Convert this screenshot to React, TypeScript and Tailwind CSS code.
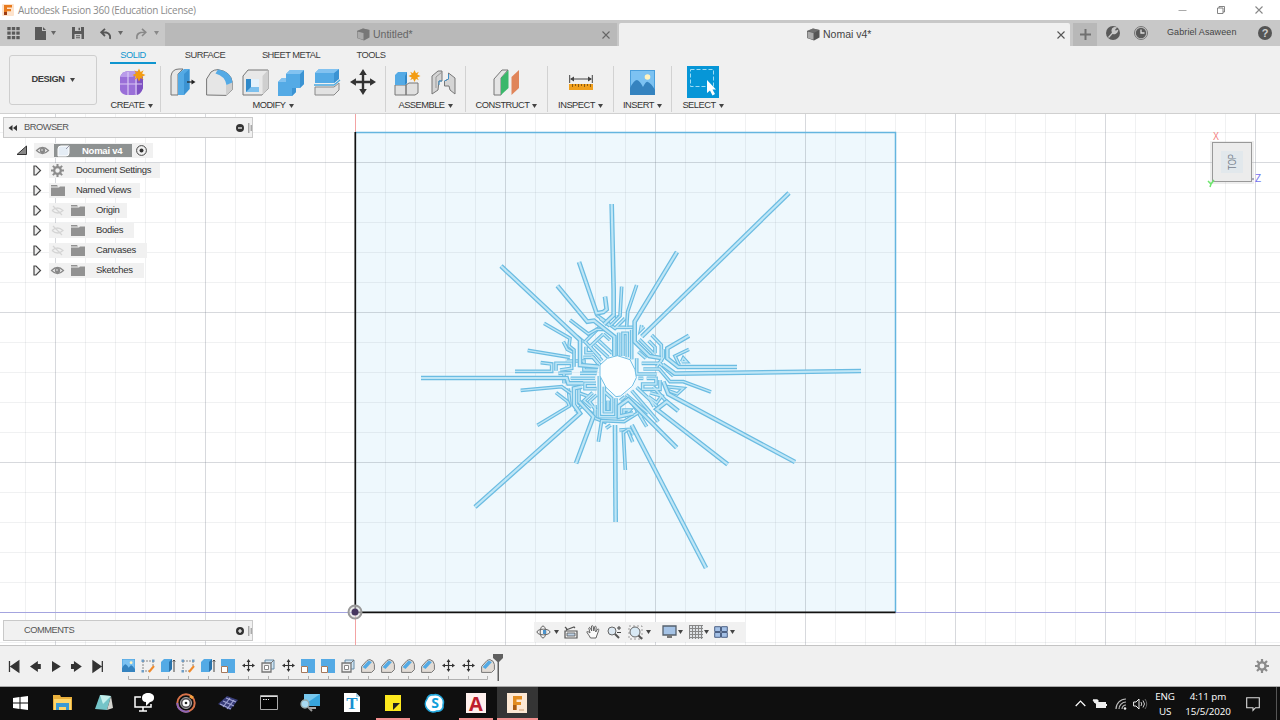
import React from "react";

type P = { children?: React.ReactNode };

const Svg = ({ w, h, vb, children, c = "" }: { w: number; h: number; vb?: string; c?: string } & P) => (
  <svg width={w} height={h} viewBox={vb ?? `0 0 ${w} ${h}`} fill="none" className={`block shrink-0 overflow-visible ${c}`}>
    {children}
  </svg>
);

const Caret = ({ c = "text-[#444]" }: { c?: string }) => (
  <Svg w={5} h={4} c={c}><path d="M0 0h5L2.500 4z" fill="currentColor" /></Svg>
);

const Cube = ({ c = "#555" }: { c?: string }) => (
  <Svg w={14} h={13}>
    <path d="M1 3 7 .5 13.5 2v7.5L8 12.5 1 10z" fill={c} />
    <path d="M1.5 3.5 7.5 5v6.8L1.500 10z" fill="#aaa" />
    <path d="M1 3 7 .5 13.500 2 8 4.800z" fill="#777" opacity=".7" />
  </Svg>
);

const X = ({ s = 8, c = "#555" }: { s?: number; c?: string }) => (
  <Svg w={s} h={s}><path d={`M.5 .5 ${s - 0.5} ${s - 0.5}M${s - 0.5} .5 .5 ${s - 0.5}`} stroke={c} strokeWidth="1.100" /></Svg>
);

const Star = ({ x, y, r = 6 }: { x: number; y: number; r?: number }) => (
  <g transform={`translate(${x} ${y}) scale(${r / 6})`}>
    <path d="M0-6 1.500-2.800 4.300-4.300 2.800-1.500 6 0 2.800 1.500 4.300 4.300 1.500 2.800 0 6-1.500 2.800-4.300 4.300-2.800 1.500-6 0-2.800-1.500-4.300-4.300-1.500-2.800z" fill="#f39c12" />
  </g>
);

const MovePath = ({ c = "#333" }: { c?: string }) => (
  <g fill={c}>
    <path d="M13.100 5h-2.200v5.900H5v2.200h5.900V19h2.200v-5.900H19v-2.200h-5.900z" />
    <path d="M12 0 15.500 5.500h-7zM12 24l3.500-5.500h-7zM0 12l5.500-3.500v7zM24 12l-5.500-3.500v7z" />
  </g>
);

const Gear = ({ s = 13 }: { s?: number }) => (
  <Svg w={s} h={s} vb="0 0 14 14">
    <circle cx="7" cy="7" r="3.600" stroke="#8c8c8c" strokeWidth="2.400" />
    <path d="M7 0v3M7 11v3M0 7h3M11 7h3M2 2l2.200 2.200M9.800 9.800 12 12M12 2 9.800 4.200M4.200 9.800 2 12" stroke="#8c8c8c" strokeWidth="2.200" />
  </Svg>
);

/* ---------- title and tab bars ---------- */

const TitleBar = () => (
  <div className="flex h-[20px] shrink-0 items-center bg-white pl-[2px] pr-[17px]">
    <Svg w={12} h={12}>
      <rect width="12" height="12" rx="1" fill="#fde3cc" />
      <path d="M2 1h8v2.500H5V5h4v2.300H5V11H2z" fill="#e87a1d" />
      <path d="M2 8h3v3H2z" fill="#9c3a10" />
    </Svg>
    <span className="ml-[4px] whitespace-nowrap font-['Open_Sans',sans-serif] text-[10px] tracking-[-0.290px] text-[#8b8b8b]">Autodesk Fusion 360 (Education License)</span>
    <div className="ml-auto flex items-center gap-[30px]">
      <Svg w={9} h={9}><path d="M.5 4.500h8" stroke="#aaa" /></Svg>
      <Svg w={8} h={8}><path d="M2 2V.5h5.500V6H6M.5 2H6v5.500H.5z" stroke="#777" strokeWidth=".9" /></Svg>
      <X s={8} c="#888" />
    </div>
  </div>
);

const TabBar = () => (
  <div className="flex h-[26px] shrink-0 items-stretch bg-[#c8c8c8]">
    <div className="flex w-[165px] items-center pl-[7px]">
      <Svg w={13} h={12}>
        {[0, 4.5, 9].map((y) => [0, 4.5, 9].map((x) => <rect key={x + "-" + y} x={x + 0.3} y={y} width="3.400" height="3.200" fill="#5a5a5a" />))}
      </Svg>
      <Svg w={11} h={13} c="ml-[15px]"><path d="M0 0h7v4h4v9H0zM8 0l3 3H8z" fill="#5a5a5a" /></Svg>
      <span className="ml-[5px] mr-[1px]"><Caret c="text-[#666]" /></span>
      <Svg w={12} h={12} c="ml-[15px]">
        <path d="M0 0h12v12H0z" fill="#5a5a5a" /><path d="M3 0h6v4H3zM2.500 7h7v5h-7z" fill="#c8c8c8" /><path d="M6.500 .8h1.500v2.500H6.500zM4 8.300h4v1H4zM4 10.200h4v1H4z" fill="#5a5a5a" />
      </Svg>
      <Svg w={11} h={11} c="ml-[16px]"><path d="M10 11C11 5.500 7.500 4 2 4.300M5 .8 1.200 4.300 5 8" stroke="#555" strokeWidth="1.800" /></Svg>
      <span className="ml-[7px] mr-[1px]"><Caret c="text-[#666]" /></span>
      <Svg w={11} h={11} c="ml-[12px]"><path d="M1 11C0 5.500 3.500 4 9 4.300M6 .8l3.800 3.500L6 8" stroke="#888" strokeWidth="1.600" /></Svg>
      <span className="ml-[7px]"><Caret c="text-[#888]" /></span>
    </div>
    <div className="mt-[3px] flex w-[452px] items-center bg-[#b9b9b9] pl-[191px] pr-[7px]">
      <Cube c="#777" />
      <span className="ml-[3px] text-[10.500px] text-[#666]">Untitled*</span>
      <span className="ml-auto"><X c="#666" /></span>
    </div>
    <div className="ml-[2px] mt-[3px] flex w-[451px] items-center rounded-t-[2px] bg-[#f0f0f0] pl-[187px] pr-[5px]">
      <Cube />
      <span className="ml-[3px] text-[10.500px] text-[#444]">Nomai v4*</span>
      <span className="ml-auto"><X /></span>
    </div>
    <div className="ml-[3px] mt-[3px] flex w-[24px] items-center justify-center bg-[#b8b8b8]">
      <Svg w={11} h={11}><path d="M5.500 0v11M0 5.500h11" stroke="#707070" strokeWidth="2" /></Svg>
    </div>
    <div className="flex flex-1 items-center pl-[9px]">
      <Svg w={14} h={14}><circle cx="7" cy="7" r="7" fill="#5a5a5a" /><path d="m2.500 11.500 4.500-5M11.500 4.500 9 5.500 8.500 3 10 1.800C6.500 1 5.500 4 6.500 6.500s4.500.500 5-2z" stroke="#c8c8c8" strokeWidth="1.300" fill="#c8c8c8" /></Svg>
      <Svg w={14} h={14} c="ml-[14px]"><circle cx="7" cy="7" r="6.500" stroke="#777" /><circle cx="7" cy="7" r="5.200" fill="#5a5a5a" /><path d="M7 3.500V7h3.500" stroke="#ddd" strokeWidth="1.300" /></Svg>
      <span className="ml-[19px] w-[72px] whitespace-nowrap text-[9px] tracking-[0.100px] text-[#444]">Gabriel Asaween</span>
      <div className="ml-[19px] flex size-[14px] items-center justify-center rounded-full bg-[#555] text-[11px] font-bold leading-none text-[#d0d0d0]">?</div>
    </div>
  </div>
);

/* ---------- ribbon ---------- */

const blue = "#54aae5";
const edge = "#777";

const PressPull = () => (
  <Svg w={26} h={28}>
    <path d="M1 8Q2 1 9 1H13L8 6v21H1z" fill="#e6e6e6" stroke={edge} />
    <path d="M8 6 14 1h5.500v20L14 27H8z" fill={blue} /><path d="M14 6 19.500 1v20L14 27z" fill="#3b93d3" />
    <path d="M17 14h6" stroke="#222" strokeWidth="1.200" /><path d="m21.500 11.500 4 2.500-4 2.500z" fill="#222" />
  </Svg>
);
const Fillet = () => (
  <Svg w={27} h={27}>
    <path d="M.6 26V10L5 3Q8 .6 12 .6q13 2 14.400 13v7L20 26.400z" fill="#e6e6e6" stroke={edge} />
    <path d="M20 16l6.400-2.400v7L20 26.400z" fill="#cfcfcf" />
    <path d="M12 .6q13 2 14.400 13L20.500 16Q19 7 9.500 4.500z" fill={blue} />
  </Svg>
);
const Shell = () => (
  <Svg w={27} h={27}>
    <path d="M1 7 6 1h20v19l-6 6H1z" fill="#e8e8e8" stroke={edge} /><path d="M20.500 7 26 1v19l-5.500 6z" fill="#cfcfcf" />
    <path d="M4 10h13v13H4z" fill="#3089c9" /><path d="M9 10h8v8H9z" fill="#e3f1fb" /><path d="m4 23 5-5h8v5z" fill="#7cc0ee" />
  </Svg>
);
const Combine = () => (
  <Svg w={28} h={27}>
    <path d="M9 5 13 1h14v14l-4 4h-4v4l-4 4H1V13l4-4h4z" fill={blue} /><path d="M23 5l4-4v14l-4 4zM19 19v4l-4 4v-8z" fill="#3b93d3" /><path d="M9 5l4-4h14l-4 4zM1 13l4-4h4v4z" fill="#82c2f0" />
  </Svg>
);
const Split = () => (
  <Svg w={26} h={28}>
    <path d="M1 5 5 1h20v9l-5 5H1z" fill={blue} /><path d="M20 5l5-4v10l-5 4z" fill="#3b93d3" /><path d="M1 5l4-4h20l-5 4z" fill="#82c2f0" />
    <path d="M0 17h20l6-5" stroke="#49a8e0" strokeWidth="1.300" /><path d="M1 19h19l5-4v7l-5 5H1z" fill="#e2e2e2" stroke="#888" />
  </Svg>
);
const Create = () => (
  <Svg w={28} h={28}>
    <path d="M2 9Q4 3 11 3h8q5 1 6 6v11q-2 6-9 7H8q-5-1-6-5z" fill="#9a6fd8" /><path d="M2 9Q4 3 11 3h8l-4 6Z" fill="#b99bea" /><path d="M19 9h6v11q-2 6-6 7z" fill="#7f52c2" />
    <path d="M10 4v23M2 16h22M18 8v18" stroke="#d9c8f4" strokeWidth="1.200" /><Star x={21} y={7} r={6.500} />
  </Svg>
);
const NewComp = () => (
  <Svg w={27} h={27}>
    <path d="M1 16h11v10H1zM12 16l3-2h9v10l-3 2h-9z" fill="#e0e0e0" stroke={edge} /><path d="M1 6 4 3h9v11l-2 2H1z" fill={blue} /><path d="M11 7l2-4v11l-2 2z" fill="#2f86c6" /><Star x={20.500} y={7} />
  </Svg>
);
const Joint = () => (
  <Svg w={25} h={25}>
    <path d="M1 24V6l6-5h4v10H8l-1 9z" fill="#d4d4d4" stroke="#777" /><path d="M5 18V7l6-5" stroke="#999" />
    <path d="M13.500 11l4-2V3l6.500 5v16l-5-4-1-4h-4.500z" fill="#d4d4d4" stroke="#777" /><path d="M8 15v-4h3M17.500 4v5l-4 2" stroke="#3b8fc9" />
  </Svg>
);
const Construct = () => (
  <Svg w={28} h={27}>
    <path d="M1 10 9 1h6L8 9v17H1z" fill="#e5e5e5" stroke={edge} /><path d="M8 9 15.500 1v18L8 26z" fill="#3bb76b" /><path d="M18.500 8 26 1v18l-7.500 7z" fill="#e0855a" />
  </Svg>
);
const Inspect = () => (
  <Svg w={24} h={15}>
    <path d="M.7 0v8M23.300 0v8M2 4h20" stroke="#444" /><path d="m1 4 4-2.500v5zM23 4l-4-2.500v5z" fill="#444" /><path d="M0 9h24v6H0z" fill="#f0a01e" /><path d="M3.500 9v3M6.500 9v2M9.500 9v3M12.500 9v2M15.500 9v3M18.500 9v2M21.500 9v3" stroke="#8b5a10" />
  </Svg>
);
const Insert = ({ s = 25 }: { s?: number }) => (
  <Svg w={s} h={s} vb="0 0 25 25">
    <path d="M0 0h25v25H0z" fill="#4a9fdc" /><path d="M1 1h23v17H1z" fill="#7cc2f2" /><path d="M0 18Q4 10 7 10q3 1 6 7 3-6 5-5 3 1 7 8v5H0z" fill="#3583bf" /><circle cx="17.500" cy="7" r="2.800" fill="#fff3c0" />
  </Svg>
);
const Select = () => (
  <Svg w={32} h={32}>
    <path d="M0 0h32v32H0z" fill="#0696d7" /><path d="M3.500 3.500h23v17h-23z" stroke="#9fdcf5" strokeDasharray="4 2" /><path d="M20 14v13l3-2.500 2.500 5 2.500-1.500-2.500-4.500H29z" fill="#fff" />
  </Svg>
);

const Group = ({ label, w, children, sep = true }: { label: string; w: string; sep?: boolean } & P) => (
  <div className={`flex flex-col items-center ${w} ${sep ? "border-r border-[#d2d2d2]" : ""}`}>
    <div className="flex h-[32px] shrink-0 items-center justify-center">{children}</div>
    <div className="flex h-[14px] shrink-0 items-center gap-[3px] whitespace-nowrap pt-[2px] text-[9.300px] leading-none tracking-[-0.500px] text-[#333]">{label}<Caret /></div>
  </div>
);

const Cell = ({ children }: P) => <div className="flex w-[36px] justify-center">{children}</div>;

const Ribbon = () => (
  <div className="flex h-[68px] shrink-0 border-b border-[#d0d0d0] bg-[#f0f0f0]">
    <div className="w-[103px] pl-[9px] pt-[9px]">
      <div className="flex h-[50px] w-[88px] items-center justify-center gap-[5px] rounded-[3px] border border-[#cecece] text-[9.300px] font-bold tracking-[-0.400px] text-[#3c3c3c]">DESIGN<Caret /></div>
    </div>
    <div className="flex flex-col">
      <div className="flex h-[20px] text-[9.300px] leading-[18px] tracking-[-0.500px] text-[#3c3c3c]">
        <div className="ml-[7px] h-[18px] w-[46px] border-b-2 border-[#0f95cf] text-center text-[#0f95cf]">SOLID</div>
        <div className="w-[98px] text-center">SURFACE</div>
        <div className="w-[74px] text-center">SHEET METAL</div>
        <div className="w-[86px] text-center">TOOLS</div>
      </div>
      <div className="flex h-[46px]">
        <Group label="CREATE" w="w-[58px]"><Create /></Group>
        <Group label="MODIFY" w="w-[225px]">
          <Cell><PressPull /></Cell><Cell><Fillet /></Cell><Cell><Shell /></Cell><Cell><Combine /></Cell><Cell><Split /></Cell>
          <Cell><Svg w={26} h={26} vb="0 0 24 24"><MovePath /></Svg></Cell>
        </Group>
        <Group label="ASSEMBLE" w="w-[80px]"><Cell><NewComp /></Cell><Cell><Joint /></Cell></Group>
        <Group label="CONSTRUCT" w="w-[82px]"><Construct /></Group>
        <Group label="INSPECT" w="w-[66px]"><Inspect /></Group>
        <Group label="INSERT" w="w-[58px]"><Insert /></Group>
        <Group label="SELECT" w="w-[62px]" sep={false}><Select /></Group>
      </div>
    </div>
  </div>
);

/* ---------- sketch ---------- */

// Channels that run from the ring to an open tip; sketch units are a third of a pixel.
const rays = [
  "867,-231 425,200",
  "531,-54 404,155 404,215 448,258 482,264",
  "335,-198 341,60 341,135 312,163",
  "237,-24 290,130 310,126 320,118 315,80",
  "3,-12 240,210 240,285 295,290",
  "172,47 262,155 282,152 343,200 343,258",
  "-237,324 200,324 205,340 250,340",
  "-75,711 240,430 222,405 222,355 246,350",
  "228,580 280,440 238,395",
  "347,756 345,465",
  "618,894 395,465",
  "530,533 385,388 357,408 357,440 400,430",
  "683,583 470,418 500,395 535,423",
  "885,576 505,372 490,335",
  "1083,303 525,311 488,284",
  "711,291 535,291 502,265 502,235 567,197",
];
const thin = [
  "365,50 360,138 332,166", "410,45 383,125 380,170", "132,160 210,205 207,228 222,240 222,290",
  "210,150 265,192 290,178 318,178", "83,241 210,262", "45,304 155,304 155,282 122,278",
  "62,361 185,350 212,370", "112,466 208,408 203,395 168,368",
  "295,515 305,452 372,455 415,428", "376,600 370,488 382,480", "398,516 385,485",
  "633,366 550,335 510,335 478,297 430,297", "567,238 525,258 538,285",
];
// Narrow folded channels round the ring.
const maze = [
  "290,135 345,175 375,145", "348,172 400,172", "356,188 356,258", "369,258 369,190 382,190 382,262", "395,180 395,268",
  "418,208 462,252", "446,212 465,232 465,250", "455,195 484,225 484,275", "425,165 422,180 432,170",
  "410,265 410,312 470,312", "425,280 480,280 520,318", "440,325 468,325 468,342 428,342 428,358 480,358 480,330",
  "500,350 550,355 532,372 505,362", "410,352 478,415", "395,362 475,455", "378,374 445,430",
  "372,440 372,420 390,420 372,440", "410,420 440,470", "450,368 485,378 470,398 445,380 462,410",
  "460,350 500,395", "298,318 298,440 348,440 348,385", "313,350 313,425 335,425 335,385 313,365", "324,392 324,420",
  "290,310 240,310", "175,310 215,308", "180,300 215,295 215,280 168,280 168,302", "200,273 252,273 252,300 292,300",
  "285,325 212,325", "288,340 255,340 255,356 290,356", "278,368 252,392 275,412", "290,375 268,395 288,420",
  "237,345 237,400 278,432", "205,355 210,408", "300,170 255,215 300,262", "310,192 270,230 306,272", "285,225 325,262",
  "296,212 337,250", "190,215 202,238 225,250", "250,262 280,262 295,282", "545,275 550,264 560,275 545,275",
  "318,475 332,465", "358,480 390,478 400,495",
  "258,230 258,248 280,248", "300,145 330,168", "350,150 350,135", "490,238 490,262 470,290", "415,325 430,325",
  "240,370 262,378", "225,425 250,405", "330,210 310,192", "192,340 192,312", "250,215 232,200", "438,265 415,245",
  "360,392 375,380", "400,405 425,442", "285,405 285,445 320,458", "300,285 275,258",
];

const Lines = ({ d, a, b }: { d: string[]; a: number; b: number }) => (
  <g strokeLinejoin="miter" strokeLinecap="butt">
    {d.map((p) => <polyline key={"o" + p} points={p} stroke="#6bbce2" strokeWidth={a} />)}
    {d.map((p) => <polyline key={"i" + p} points={p} stroke="#bfe6f6" strokeWidth={b} />)}
  </g>
);

const range = (a: number, b: number, s: number) => Array.from({ length: Math.floor((b - a) / s) + 1 }, (_, i) => a + i * s);

const Sketch = () => (
  <svg className="absolute inset-0" width="1280" height="531" viewBox="0 114 1280 531" fill="none">
    <rect x="0" y="114" width="1280" height="531" fill="#fff" />
    <rect x="355" y="132" width="541" height="480" fill="#eef8fd" />
    <g shapeRendering="crispEdges">
      {range(25, 1280, 30).map((x) => <path key={x} d={`M${x + 0.5} 114v531`} stroke="#6b7480" strokeOpacity={(x - 55) % 150 === 0 ? 0.27 : 0.1} />)}
      {range(132, 645, 30).map((y) => <path key={y} d={`M0 ${y + 0.5}h1280`} stroke="#6b7480" strokeOpacity={(y - 162) % 150 === 0 ? 0.27 : 0.1} />)}
      <path d="M0 612.500h1280" stroke="#a4a4df" />
      <path d="M355.500 114v18M355.500 612v33" stroke="#f3a3a3" />
    </g>
    <path d="M355 132.500h540.500V612" stroke="#64b5df" strokeWidth="1.500" />
    <g transform="translate(500 270) scale(.33333)">
      <circle cx="353" cy="317" r="56" fill="#f8fdff" />
      <Lines d={maze} a={11} b={4.5} />
      <Lines d={thin} a={11} b={4} />
      <Lines d={rays} a={14} b={6.500} />
      <path d="m300 285 22-20 30-8 38 12 15 30 4 24-12 25-35 30-14 2-30-28-18-34z" fill="#fbfeff" stroke="#6fbfe5" strokeWidth="3" />
    </g>
    <path d="M355.300 132v480M355 612.300h540.500" stroke="#111" strokeWidth="1.700" />
    <circle cx="355" cy="612" r="6.500" stroke="#999" strokeWidth="2" fill="#ddd" fillOpacity=".6" />
    <circle cx="355" cy="612" r="3.500" fill="#46365e" />
  </svg>
);

/* ---------- browser tree ---------- */

const Eye = ({ off }: { off?: boolean }) => (
  <Svg w={13} h={9}>
    {off ? (
      <path d="M1 4.500Q6.500-.5 12 4.500 6.500 9.500 1 4.500M2 0l9 9" stroke="#d4d4d4" strokeWidth="1.200" />
    ) : (
      <><path d="M.5 4.500Q6.500-1.500 12.500 4.500 6.500 10.500.5 4.500z" fill="#eee" stroke="#888" strokeWidth="1.200" /><circle cx="6.500" cy="4.500" r="2.700" fill="#888" /><circle cx="6" cy="4" r=".8" fill="#eee" /></>
    )}
  </Svg>
);
const Folder = () => <Svg w={14} h={11}><path d="M0 0h6l1 1.500H0zM0 2.500h8l1-1h5V11H0z" fill="#929292" /></Svg>;
const Tri = () => <Svg w={8} h={11}><path d="M1 1h2l4.500 4.500L3 10H1z" stroke="#444" strokeWidth="1.200" fill="#eee" /></Svg>;

const Row = ({ label, icon, eye, w }: { label: string; icon: React.ReactNode; eye?: React.ReactNode; w: string }) => (
  <div className="flex h-[20px] items-center pl-[30px]">
    <Tri />
    <div className={`ml-[8px] flex h-[15px] items-center whitespace-nowrap bg-[#f1f1f1] ${w}`}>
      {eye && <div className="flex w-[20px] pl-[2px]">{eye}</div>}
      <div className="flex w-[27px] pl-[2px]">{icon}</div>
      <span className="text-[9.500px] leading-none tracking-[-0.300px] text-[#333]">{label}</span>
    </div>
  </div>
);

const PanelHead = ({ label, plus }: { label: string; plus?: boolean }) => (
  <div className="flex h-[21px] w-[250px] items-center border border-[#c9c9c9] bg-[#f1f1f1] pl-[4px] text-[9.300px] tracking-[-0.500px] text-[#555]">
    <div className="w-[16px]">{!plus && <Svg w={9} h={6}><path d="M4.500 0v6L.5 3zM9 0v6L5 3z" fill="#333" /></Svg>}</div>
    {label}
    <div className="ml-auto mr-[4px]">
      <Svg w={8} h={8}><circle cx="4" cy="4" r="4" fill="#333" /><path d={plus ? "M2 4h4M4 2v4" : "M2 4h4"} stroke="#fff" strokeWidth="1.200" /></Svg>
    </div>
    <Svg w={4} h={10}><path d="M.8 0v10M3.200 2v6" stroke="#888" /></Svg>
  </div>
);

const Browser = () => (
  <div className="absolute left-[3px] top-[3px] w-[250px]">
    <PanelHead label="BROWSER" />
    <div className="flex h-[20px] items-center pl-[14px] pt-[5px]">
      <Svg w={10} h={9}><path d="M9.500 0v8.500H0z" fill="#888" stroke="#333" /></Svg>
      <div className="ml-[7px] flex h-[15px] w-[119px] items-center bg-[#f1f1f1] pl-[2px]">
        <Eye />
        <div className="ml-[5px] flex h-[13px] w-[78px] items-center bg-[#8e9292] pl-[3px]">
          <Svg w={13} h={12}><path d="M1 4q0-3 3-3h8v7q0 3-3 3H1z" fill="#e5edf5" stroke="#fff" /><path d="M9 4l3-3" stroke="#99a" /></Svg>
          <span className="ml-[12px] whitespace-nowrap text-[9.500px] font-bold leading-none tracking-[-0.250px] text-white">Nomai v4</span>
        </div>
        <Svg w={11} h={11} c="ml-[4px]"><circle cx="5.500" cy="5.500" r="4.900" stroke="#444" /><circle cx="5.500" cy="5.500" r="2" fill="#333" /></Svg>
      </div>
    </div>
    <div className="pt-[2px]">
      <Row label="Document Settings" icon={<Gear />} w="w-[111px]" />
      <Row label="Named Views" icon={<Folder />} w="w-[91px]" />
      <Row label="Origin" eye={<Eye off />} icon={<Folder />} w="w-[78px]" />
      <Row label="Bodies" eye={<Eye off />} icon={<Folder />} w="w-[85px]" />
      <Row label="Canvases" eye={<Eye off />} icon={<Folder />} w="w-[98px]" />
      <Row label="Sketches" eye={<Eye />} icon={<Folder />} w="w-[95px]" />
    </div>
  </div>
);

const ViewCube = () => (
  <svg className="absolute left-[1205px] top-[14px]" width="62" height="64" viewBox="1205 128 62 64" fill="none">
    <rect x="1210" y="141" width="44" height="43" fill="#bbb" opacity=".25" />
    <rect x="1212.500" y="142.500" width="39" height="39" fill="#ececec" stroke="#999" />
    <rect x="1221" y="151" width="22" height="22" fill="#e2e8ec" />
    <text transform="translate(1235.500 170) rotate(-90)" fontSize="10" textLength="16" lengthAdjust="spacingAndGlyphs" fill="#78838f">TOP</text>
    <text x="1213" y="140" fontSize="10" textLength="6" lengthAdjust="spacingAndGlyphs" fill="#f37d7d">X</text>
    <text x="1255" y="182" fontSize="10" fill="#7373ee">Z</text>
    <path d="m1208 181 3 3 3-4M1211 184l-1 3" stroke="#6de56d" strokeWidth="1.500" />
    <path d="M1252 179h2" stroke="#668" />
  </svg>
);

const NavBar = () => (
  <div className="absolute left-[534px] top-[508px] flex h-[20px] w-[211px] items-center bg-[#f1f1f1] pl-[2px]">
    <Svg w={15} h={14}><ellipse cx="7.500" cy="7" rx="6.500" ry="2.800" stroke="#666" /><ellipse cx="7" cy="7" rx="2.800" ry="6" stroke="#666" /><path d="M7 5h3v4H7z" fill="#4b93cc" /></Svg>
    <span className="ml-[3px]"><Caret /></span>
    <Svg w={14} h={13} c="ml-[5px]"><path d="M1 5h12v7H1zM2 4l8-3 1 1M3 3 1 1" stroke="#555" strokeWidth="1.200" /><path d="M3 7h8v3H3z" fill="#bcd0e4" stroke="#555" strokeWidth=".8" /></Svg>
    <Svg w={14} h={14} c="ml-[8px]"><path d="M4.500 13C3 10 1 8 .8 6.800 2 6 3.300 7.500 4 8L2.800 3c.7-1.200 1.700-.3 2 1l.9 2-.2-5c1-.9 1.700 0 1.800 1L7.800 6l1-4.500c1-.7 1.600.2 1.400 1.200L9.700 7l2-3c1-.3 1.400.6 1 1.400L11 10l-1 3z" fill="#fafafa" stroke="#555" strokeWidth=".9" /></Svg>
    <Svg w={15} h={14} c="ml-[7px]"><circle cx="5" cy="6" r="4" fill="#dce8f2" stroke="#666" /><path d="m8 9 4 4" stroke="#555" strokeWidth="2" /><path d="M10 3h4M12 1v4M10 7.500h4" stroke="#444" /></Svg>
    <Svg w={15} h={15} c="ml-[6px]"><path d="M1 1h13v13H1z" stroke="#888" strokeDasharray="2 2" strokeWidth=".8" /><circle cx="7" cy="7" r="5" fill="#d9eaf5" stroke="#666" /><path d="m10.500 10.500 3.500 3.500" stroke="#555" strokeWidth="2" /></Svg>
    <span className="ml-[3px]"><Caret /></span>
    <Svg w={15} h={14} c="ml-[11px]"><path d="M1 1h13v9H1z" fill="#a5c3e6" stroke="#55616e" strokeWidth="1.300" /><path d="M5 10h5v3H5z" fill="#777" /></Svg>
    <span className="ml-[1px]"><Caret /></span>
    <Svg w={14} h={14} c="ml-[6px]"><path d="M0 0h14v14H0z" fill="#dfe3e6" /><path d="M.5 0v14M3.500 0v14M6.500 0v14M9.500 0v14M12.500 0v14M0 .5h14M0 3.500h14M0 6.500h14M0 9.500h14M0 12.500h14" stroke="#888" /></Svg>
    <span className="ml-[1px]"><Caret /></span>
    <Svg w={14} h={12} c="ml-[5px]"><path d="M.7 .7h5.800v4.800H.7zM7.500.7h5.800v4.800H7.500zM.7 6.500h5.800v4.800H.7zM7.500 6.500h5.800v4.800H7.500z" fill="#a3c0e6" stroke="#4d6286" /></Svg>
    <span className="ml-[2px]"><Caret /></span>
  </div>
);

/* ---------- timeline ---------- */

const feature: Record<string, React.ReactNode> = {
  img: <Insert s={13} />,
  sketch: <Svg w={14} h={14}><path d="M2 2h10M2 2v10h6M12 2v6" stroke="#888" strokeDasharray="2 1" /><path d="M.5 .5h2.500v2.500H.5zM11 .5h2.500v2.500H11zM.5 11h2.500v2.500H.5z" fill="#6f9cc4" /><path d="m8 13 5-6" stroke="#f08a2c" strokeWidth="2" /></Svg>,
  extrude: <Svg w={14} h={14}><path d="M0 3 3 0h8v10l-3 3H0z" fill={blue} /><path d="M8 3l3-3v10l-3 3z" fill="#2a73ab" /><path d="M13 1v12M11.800 2.500 13 1l1.200 1.500" stroke="#444" /></Svg>,
  scale: <Svg w={14} h={14}><path d="M0 0h14v14H7V7H0z" fill={blue} /><path d="M.5 7.500h6v6h-6z" fill="#fff" stroke="#a5785c" /></Svg>,
  move: <Svg w={13} h={13} vb="0 0 24 24"><MovePath /></Svg>,
  shell: <Svg w={14} h={14}><path d="M4 4V1h9v9h-3" fill="#cfe5f4" stroke="#668ba6" /><path d="M1 4h9v9H1z" fill="#eee" stroke="#777" strokeWidth="1.300" /><path d="M3.500 6.500h4v4h-4z" fill="#fff" stroke="#888" /><path d="m10 4 3-3" stroke="#777" /></Svg>,
  fillet: <Svg w={14} h={14}><path d="M.6 13.400V7.500L6 1.500Q8 .6 9 .6q4 1 4.400 5v5l-2.800 2.800H.6z" fill="#e2dcd6" stroke="#777" /><path d="M1.500 8 7.500 1.500 11 3 4.500 10z" fill={blue} /></Svg>,
};
const steps = ["img", "sketch", "extrude", "sketch", "extrude", "scale", "move", "shell", "move", "scale", "scale", "shell", "fillet", "fillet", "fillet", "fillet", "move", "move", "fillet"];

const playback: [string, boolean][] = [
  ["M1.500 0v11M11 0v11L3 5.500z", true],
  ["M12 3v5H9v3L1 5.500 9 0v3z", false],
  ["M2 0l9 5.500L2 11z", false],
  ["M1 3v5h3v3l8-5.500L4 0v3z", false],
  ["M2 0v11l8-5.500zM11.500 0v11", true],
];

const Timeline = () => (
  <div className="flex h-[42px] shrink-0 border-b border-t border-b-[#aaa] border-t-[#c4c4c4] bg-[#f0f0f0]">
    <div className="flex h-[41px] w-[118px] items-center gap-[8px] pl-[8px]">
      {playback.map(([d, bar]) => (
        <Svg key={d} w={12.8} h={11} vb="0 0 13 11"><path d={d} fill="#333" stroke={bar ? "#333" : "none"} strokeWidth="1.300" /></Svg>
      ))}
    </div>
    <div className="flex">
      {steps.map((s, i) => (
        <div key={i} className="flex w-[20px] flex-col items-center">
          <div className="flex h-[31px] items-center pt-[8px]">{feature[s]}</div>
          <Svg w={20} h={5}>
            <path d={i === 0 ? "M20 2.500H10.500V-1" : i === steps.length - 1 ? "M0 2.500h9.500V-1" : "M0 2.500h20M10.500 2.500V-1"} stroke="#b0b0b0" />
          </Svg>
        </div>
      ))}
    </div>
    <Svg w={12} h={27} c="-ml-[6px] mt-[8px]"><path d="M1 0h10v4L7 8v19H5.500V8L1 4z" fill="#606060" /></Svg>
    <div className="ml-auto mr-[11px] flex items-center"><Gear s={14} /></div>
  </div>
);

/* ---------- taskbar ---------- */

const apps: React.ReactNode[] = [
  <Svg w={15} h={14}><path d="M0 2l6.500-1v5.600H0zM7.500.9 15 0v6.600H7.500zM0 7.500h6.500V13L0 12zM7.500 7.500H15V14l-7.500-1z" fill="#fff" /></Svg>,
  <Svg w={19} h={17}><path d="M0 1h7l1 2h11v13H0z" fill="#eab03c" /><path d="M1 5h17v11H1z" fill="#ffd66b" /><path d="M3 9h13v7h-3v-3H6v3H3z" fill="#3c9ad4" /></Svg>,
  <Svg w={19} h={18}><path d="M6 1 17 2l-4 14L1 15z" fill="#74c4c8" /><path d="M6 1 17 2 9 10z" fill="#c5f0ed" /><path d="m13 16 4-14 2 12z" fill="#d4d4cf" /></Svg>,
  <Svg w={21} h={19}><path d="M7 4H1v10h16v-3M9 14v4M5 18h8" stroke="#fff" strokeWidth="1.500" /><path d="M8 5c0-7 13-6 12 0 0 3-3 4-4 4l-4 4V9C9 9 8 7 8 5z" fill="#fff" /></Svg>,
  <Svg w={20} h={20}><circle cx="10" cy="10" r="8.700" stroke="#d9734a" strokeWidth="2" /><path d="M1.300 10a8.700 8.700 0 0 0 12 8" stroke="#8c66b8" strokeWidth="2" /><circle cx="10" cy="10" r="5.500" fill="#504b50" stroke="#aaa" /><circle cx="10" cy="10" r="3.600" fill="#fff" /><circle cx="10" cy="10" r="1.300" fill="#222" /><path d="m14 3 3 2" stroke="#f4a040" strokeWidth="3" /></Svg>,
  <Svg w={20} h={16}><path d="m0 9 9-8 11 4-8 10z" fill="#373c78" /><path d="m2 9 11 5M5 6l11 5M8 3l10 4M5 12l7-9M9 14l7-9" stroke="#a2a5d4" strokeWidth="1.100" /></Svg>,
  <Svg w={18} h={15}><path d="M.5 .5h17v14H.5z" fill="#050505" stroke="#aaa" /><path d="M1 1.500h16" stroke="#ddd" /><path d="M3 4.500h6" stroke="#eee" strokeDasharray="1.500 1" /></Svg>,
  <Svg w={20} h={19}><path d="M4 1h16v12H4z" fill="#38a5dd" /><path d="M4 1h16L4 12z" fill="#76c7ed" /><path d="M9 15h7" stroke="#aaa" strokeWidth="2" /><circle cx="5" cy="11" r="4" fill="#a8d9f0" stroke="#9aa" strokeWidth="1.300" /><path d="m8 14 4 4" stroke="#999" strokeWidth="2" /></Svg>,
  <Svg w={16} h={19}><path d="M0 0h12l4 4v15H0z" fill="#fff" /><path d="M12 0v4h4z" fill="#aad4ec" /><text x="8" y="16" textAnchor="middle" fontSize="17" fill="#188fd0" className="font-['Liberation_Serif',serif] font-bold">T</text></Svg>,
  <Svg w={16} h={16}><path d="M0 0h16v16H0z" fill="#fde91e" /><path d="M8 8h7l-7 7z" fill="#222" /></Svg>,
  <Svg w={18} h={18}><path d="M1 5A5 5 0 0 1 7 1a8 8 0 0 1 10 10 5 5 0 0 1-6 6A8 8 0 0 1 1 5z" fill="#fff" stroke="#22a7dd" strokeWidth="1.600" /><text x="9" y="14" textAnchor="middle" fontSize="14" fill="#119fda" className="font-bold">S</text></Svg>,
  <Svg w={20} h={20}><path d="M0 0h20v20H0z" fill="#fff0ed" /><text x="10" y="17.500" textAnchor="middle" fontSize="20" fill="#bd1e2d" className="font-bold">A</text></Svg>,
  <Svg w={20} h={20}><path d="M0 0h20v20H0z" fill="#fde8d4" /><path d="M6 3h9v3.500H9.500V9H14v3H9.500v5H6z" fill="#e28c20" /><path d="M6 12h3.500v5H6z" fill="#a85a12" /><path d="M12 17h5" stroke="#ca9b70" /></Svg>,
];

const Taskbar = () => (
  <div className="flex h-[33px] shrink-0 bg-[#0f0f0f] font-['Open_Sans',sans-serif] text-white">
    <div className="flex">
      {apps.map((a, i) => (
        <div key={i} className={`flex w-[41.400px] items-center justify-center ${i === 12 ? "bg-[#353535]" : ""}`}>
          <div className={`flex h-[33px] items-center justify-center border-b-2 ${i === 12 ? "w-full border-[#f28f8f]" : i === 9 || i === 11 ? "w-[34px] border-[#f28f8f]" : "w-[34px] border-transparent"}`}>{a}</div>
        </div>
      ))}
    </div>
    <div className="ml-auto flex items-center text-center text-[9.800px] leading-[15px]">
      <Svg w={11} h={7}><path d="m.7 6 4.800-5 4.800 5" stroke="#fff" strokeWidth="1.200" /></Svg>
      <Svg w={14} h={10} c="ml-[7px]"><path d="M3 3h10v6H3z" fill="#eee" /><path d="M13 5h1v2h-1z" fill="#eee" /><path d="M0 1h5v3H2zM1 0v1M3 0v1" fill="#eee" stroke="#eee" /></Svg>
      <Svg w={12} h={12} c="ml-[8px]"><path d="M1 11A10 10 0 0 1 11 1M4 11a7 7 0 0 1 7-7M7 11a4 4 0 0 1 4-4" stroke="#bbb" strokeWidth="1.200" /><circle cx="10" cy="10.500" r="1.300" fill="#eee" /></Svg>
      <Svg w={14} h={12} c="ml-[6px]"><path d="M.6 4H3l3-3v10L3 8H.6z" stroke="#eee" /><path d="M8 4q1.500 2 0 4M10 2.500q3 3.500 0 7" stroke="#ccc" /><path d="M12 1q3.500 5 0 10" stroke="#666" /></Svg>
      <div className="ml-[8px] w-[20px] tracking-[-0.200px]">ENG<br />US</div>
      <div className="ml-[9px] w-[48px] whitespace-nowrap tracking-[-0.100px]">4:11 pm<br />15/5/2020</div>
      <Svg w={14} h={14} c="ml-[14px] mr-[16px]"><path d="M.7 .7h12.600v10H9.500l-2.500 2.600V10.700H.7z" stroke="#ddd" strokeWidth="1.100" /></Svg>
      <div className="mr-[3px] h-full w-px bg-[#555]" />
    </div>
  </div>
);

export default function App() {
  return (
    <div className="flex h-[720px] w-[1280px] flex-col overflow-hidden bg-white font-['Liberation_Sans',Arial,sans-serif]">
      <TitleBar />
      <TabBar />
      <Ribbon />
      <div className="relative min-h-0 flex-1">
        <Sketch />
        <Browser />
        <ViewCube />
        <div className="absolute left-[3px] top-[506px]"><PanelHead label="COMMENTS" plus /></div>
        <NavBar />
      </div>
      <Timeline />
      <Taskbar />
    </div>
  );
}
